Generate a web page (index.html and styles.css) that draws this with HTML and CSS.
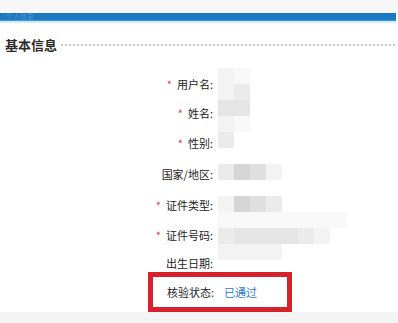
FILE: index.html
```html
<!DOCTYPE html>
<html lang="zh-CN">
<head>
<meta charset="utf-8">
<title>基本信息</title>
<link rel="stylesheet" href="styles.css">
</head>
<body>
<div class="top"></div>
<div class="bar"><span class="bar-title">个人信息</span></div>
<div class="stripe"></div>

<div class="section-head">
  <h2 class="section-title">基本信息</h2>
  <div class="dots"></div>
</div>

<div class="form">
  <div class="mosaic">
    <div class="mrow"><i class="s1"></i><i class="s0"></i></div>
    <div class="mrow"><i class="s1"></i><i class="s2"></i></div>
    <div class="mrow"><i class="s3"></i><i class="s3"></i></div>
    <div class="mrow"><i class="s1"></i><i class="s0"></i></div>
    <div class="mrow"><i class="s2"></i></div>
    <div class="mrow"></div>
    <div class="mrow"><i class="s2"></i><i class="s5"></i><i class="s4"></i><i class="s1"></i></div>
    <div class="mrow"></div>
    <div class="mrow"><i class="s1"></i><i class="s5"></i><i class="s4"></i><i class="s2"></i></div>
    <div class="mrow"><i class="s0"></i><i class="s0"></i><i class="s0"></i><i class="s0"></i><i class="s0"></i><i class="s0"></i><i class="s0"></i><i class="s0"></i></div>
    <div class="mrow"><i class="s2"></i><i class="s3"></i><i class="s3"></i><i class="s3"></i><i class="s3"></i><i class="s2"></i><i class="s1"></i></div>
    <div class="mrow"><i class="s1"></i><i class="s1"></i><i class="s1"></i><i class="s1"></i></div>
  </div>
  <div class="label r1"><span class="req">*</span>用户名:</div>
  <div class="label r2"><span class="req">*</span>姓名:</div>
  <div class="label r3"><span class="req">*</span>性别:</div>
  <div class="label r4">国家/地区:</div>
  <div class="label r5"><span class="req">*</span>证件类型:</div>
  <div class="label r6"><span class="req">*</span>证件号码:</div>
  <div class="label r7 low">出生日期:</div>
</div>

<div class="verify">
  <span class="verify-label">核验状态:</span>
  <span class="verify-value">已通过</span>
</div>
<div class="footer"></div>
</body>
</html>
```

FILE: styles.css
```css
html, body {
  margin: 0;
  padding: 0;
  background: #ffffff;
}
body {
  width: 398px;
  height: 323px;
  overflow: hidden;
  font-family: "Noto Sans CJK SC", "Noto Sans", sans-serif;
  color: #222222;
  font-size: 11px;
}
.top {
  height: 13px;
  background: #f7f7f7;
}
.bar {
  width: 396px;
  height: 7px;
  background: #1b78c2;
  border-bottom: 1px solid #3d96d6;
  display: flex;
  align-items: center;
}
.bar-title {
  margin-left: 6px;
  font-size: 7px;
  line-height: 7px;
  color: #4a93d2;
}
.stripe {
  width: 396px;
  height: 2px;
  background: #cdeef8;
}
.section-head {
  display: flex;
  align-items: center;
  margin-top: 12px;
  height: 20px;
  padding-left: 5px;
  width: 391px;
}
.section-title {
  margin: 0;
  font-size: 13px;
  font-weight: bold;
  color: #2b2b2b;
  line-height: 20px;
}
.dots {
  flex: 1;
  height: 2px;
  margin-left: 4px;
  margin-top: -1px;
  background: repeating-linear-gradient(to right, #c8c8c8 0 2px, transparent 2px 4px);
}
.form {
  display: grid;
  grid-template-columns: 218px 180px;
  grid-template-rows: 28px 30px 30px 32px 30px 29px 23px;
  margin-top: 15px;
}
.label {
  grid-column: 1;
  display: flex;
  align-items: center;
  justify-content: flex-end;
  padding-right: 5px;
  line-height: 14px;
  white-space: nowrap;
}
.label.low {
  align-items: flex-start;
  padding-top: 7px;
}
.req {
  color: #e23a5e;
  margin-right: 5px;
  font-size: 11px;
}
.mosaic {
  grid-column: 2;
  grid-row: 1 / 8;
  align-self: start;
  margin-top: -2px;
}
.mrow {
  display: flex;
  height: 16px;
}
.mrow i {
  display: block;
  width: 16px;
  height: 16px;
}
.s0 { background: #f8f8f8; }
.s1 { background: #f3f3f3; }
.s2 { background: #ebebeb; }
.s3 { background: #e5e5e5; }
.s4 { background: #dfdfdf; }
.s5 { background: #d5d5d5; }
.verify {
  box-sizing: border-box;
  margin-left: 148px;
  width: 144px;
  height: 40px;
  border: 5px solid #d6222b;
  display: flex;
  align-items: center;
  padding-left: 14px;
  background: #ffffff;
}
.verify-label {
  line-height: 14px;
}
.verify-value {
  margin-left: 10px;
  color: #2b7bd0;
  line-height: 14px;
}
.footer {
  height: 11px;
  background: #f4f4f4;
}
```
